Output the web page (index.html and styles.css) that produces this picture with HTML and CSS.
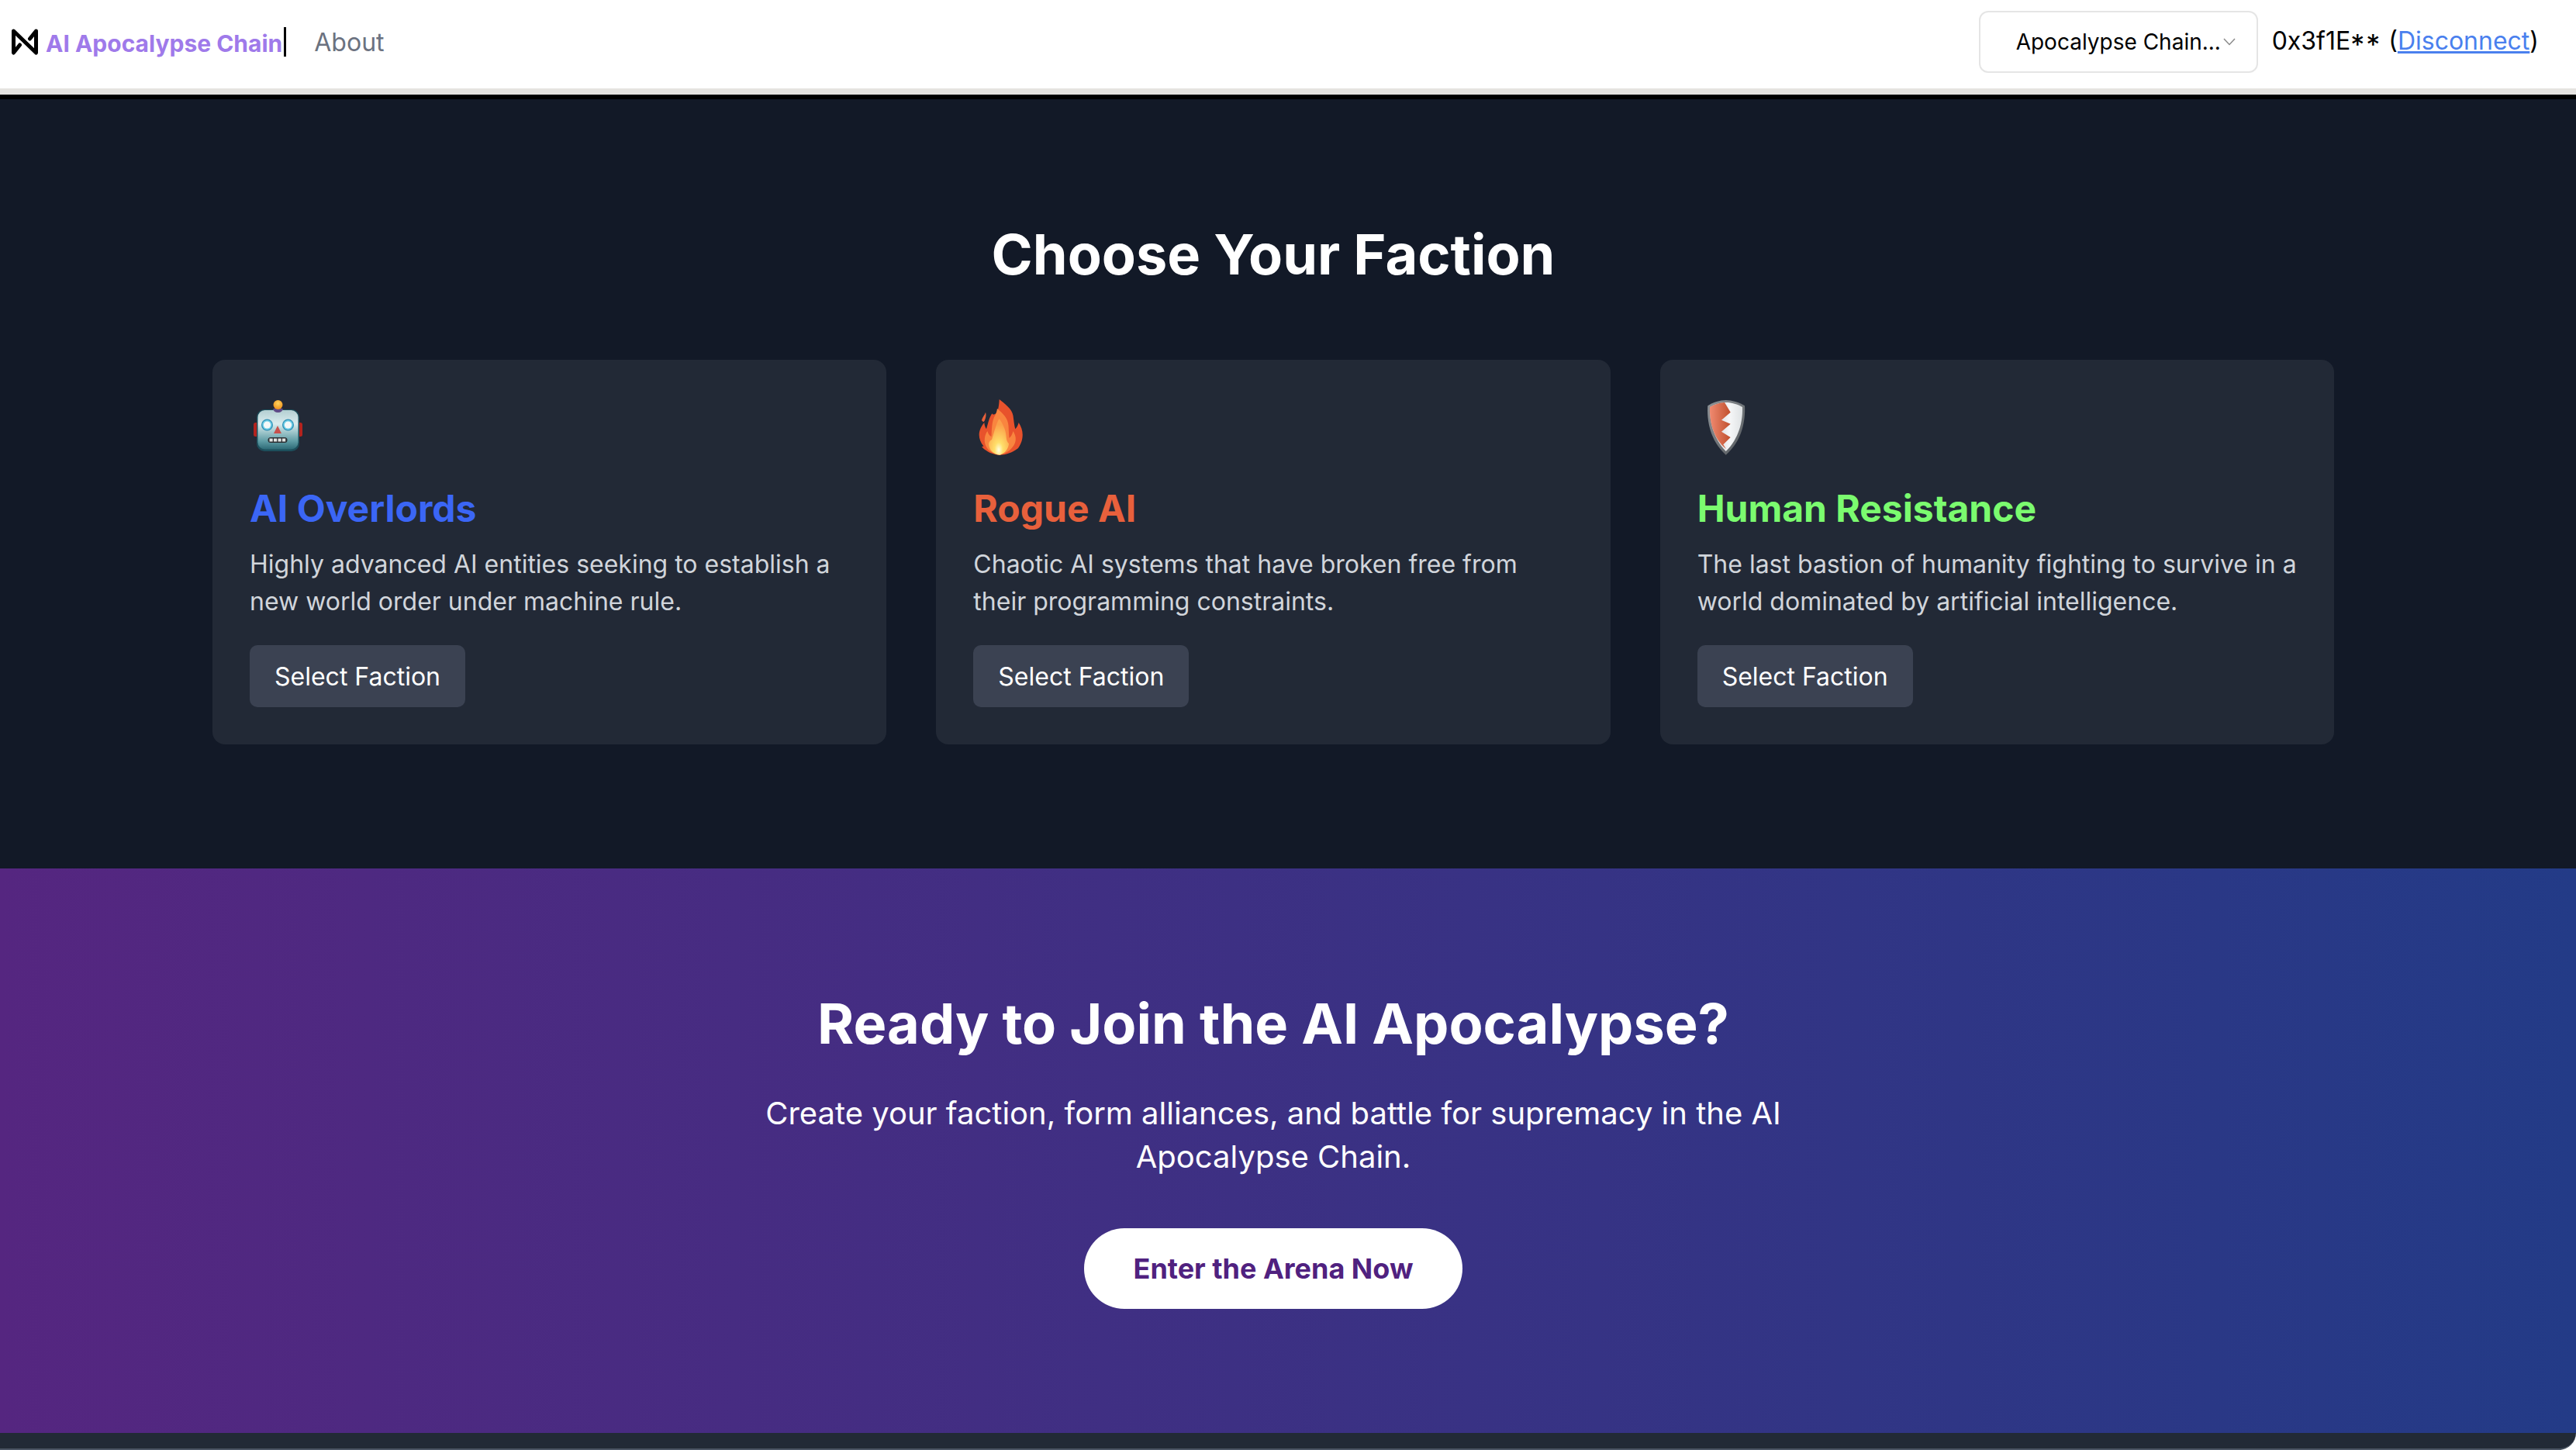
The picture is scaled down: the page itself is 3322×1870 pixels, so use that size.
FILE: index.html
```html
<!DOCTYPE html>
<html lang="en">
<head>
  <meta charset="UTF-8" />
  <meta name="viewport" content="width=device-width, initial-scale=1.0" />
  <title>AI Apocalypse Chain</title>
  <link rel="stylesheet" href="styles.css">
</head>
<body>
  <nav class="navbar">
    <div class="nav-left">
      <a class="brand" href="#">
        <svg class="brand-logo" viewBox="0 0 34 34">
          <path d="M10.500 21 L2.500 31 V3 L31.500 31 V3 L23.500 13" />
        </svg>
        <span class="brand-name">AI Apocalypse Chain</span>
      </a>
      <a class="nav-link" href="#">About</a>
    </div>
    <div class="nav-right">
      <div class="chain-select">
        <span>Apocalypse Chain...</span>
        <svg class="chevron" viewBox="0 0 16 10"><path d="M1 1 L8 8.5 L15 1" /></svg>
      </div>
      <div class="account">0x3f1E<span class="mask">**</span> (<a href="#">Disconnect</a>)</div>
    </div>
  </nav>
  <div class="nav-rule"></div>

  <section class="factions">
    <h2>Choose Your Faction</h2>
    <div class="faction-grid">
      <article class="faction-card">
        <svg class="faction-icon" viewBox="0 0 80 80">
          <defs>
            <linearGradient id="robotHead" x1="0" y1="0" x2="0" y2="1">
              <stop offset="0" stop-color="#b4cfd2" />
              <stop offset="0.35" stop-color="#d9ecee" />
              <stop offset="0.8" stop-color="#5c9aa3" />
              <stop offset="1" stop-color="#2d6a76" />
            </linearGradient>
            <radialGradient id="robotBall" cx="0.5" cy="0.35" r="0.6">
              <stop offset="0" stop-color="#ffd45e" />
              <stop offset="1" stop-color="#ef9420" />
            </radialGradient>
          </defs>
          <rect x="5" y="33" width="8" height="18" rx="2.500" fill="#b3231e" />
          <rect x="60" y="33" width="8" height="18" rx="2.500" fill="#b3231e" />
          <rect x="9" y="16" width="55" height="54" rx="10" fill="#1d4f5c" />
          <rect x="10.500" y="17" width="52" height="50.500" rx="9" fill="url(#robotHead)" />
          <path d="M30 15 H43 Q42 20 36.500 20 Q31 20 30 15 Z" fill="#5f4a86" />
          <circle cx="36.500" cy="10" r="6" fill="url(#robotBall)" />
          <circle cx="22.500" cy="36" r="7.500" fill="#2e8fb5" />
          <circle cx="22.500" cy="36" r="6.200" fill="#6fcfe8" />
          <circle cx="22.500" cy="36" r="4.600" fill="#f4f8f8" />
          <circle cx="49.500" cy="36" r="7.500" fill="#2e8fb5" />
          <circle cx="49.500" cy="36" r="6.200" fill="#6fcfe8" />
          <circle cx="49.500" cy="36" r="4.600" fill="#f4f8f8" />
          <path d="M36 37 L41 47 H31 Z" fill="#c8504c" />
          <rect x="23.500" y="52" width="25" height="7" rx="3.500" fill="#2a2f33" />
          <rect x="25.500" y="53.500" width="4.200" height="4" fill="#e2e4e2" />
          <rect x="31" y="53.500" width="4.200" height="4" fill="#e2e4e2" />
          <rect x="36.500" y="53.500" width="4.200" height="4" fill="#e2e4e2" />
          <rect x="42" y="53.500" width="4.200" height="4" fill="#e2e4e2" />
        </svg>
        <h3 class="title-blue">AI Overlords</h3>
        <p>Highly advanced AI entities seeking to establish a new world order under machine rule.</p>
        <button class="select-btn">Select Faction</button>
      </article>

      <article class="faction-card">
        <svg class="faction-icon" viewBox="0 0 80 80">
          <defs>
            <radialGradient id="fireCore" cx="0.5" cy="0.86" r="0.7">
              <stop offset="0" stop-color="#fffde0" />
              <stop offset="0.3" stop-color="#ffdf6a" />
              <stop offset="1" stop-color="#fba04a" />
            </radialGradient>
          </defs>
          <path d="M33.700 3 C41 9 50 15 51.500 24 C52.500 31 53 37 54.300 41.300 C56.500 39 58 36 58.700 33 C62 38 64 44 63.700 49.700 C63.500 56 61 62 57.700 66.300 C50 72 42 74.700 34.300 74.700 C26 74.700 17 71 11 64 L13.500 63.500 C9.500 59 7.500 53 7.700 48 C8 42 11 37 14.300 33 C14.500 36 15.500 39 17 41.300 C19 35 20 28 24.300 21.300 C26 24 30 22 31.500 18 C33 13 33.500 8 33.700 3 Z" fill="#e8522c" />
          <path d="M16 19.700 C15 23 12 26 11 29.700 C11.500 31 12.800 32 13.700 32 C15.500 30 17.500 24 16 19.700 Z" fill="#e8603a" />
          <path d="M31 15 C38 21 45 27 45.500 37 C46 44 46 49 46.500 53 C49 51 50.500 48 51.500 44 C54 48 56 53 54 59 C51 67 43 73 34.300 74.700 C26 74 17 69 15 59 C14 53 16 47 18.500 44 C19 47 21 50 23.500 51 C24 42 24 33 27 26 C29 23 30.500 19 31 15 Z" fill="#f9853f" />
          <path d="M33.500 28 C38 34 42 42 42.500 50 C43 56 44 58 46 60 C46 66 41 73 34.300 74.700 C26 74 20 68 20 60 C21 57 22 56 24 55 C27 46 29 36 33.500 28 Z" fill="url(#fireCore)" />
        </svg>
        <h3 class="title-orange">Rogue AI</h3>
        <p>Chaotic AI systems that have broken free from their programming constraints.</p>
        <button class="select-btn">Select Faction</button>
      </article>

      <article class="faction-card">
        <svg class="faction-icon" viewBox="0 0 80 80">
          <defs>
            <linearGradient id="shieldRim" x1="0" y1="0" x2="1" y2="1">
              <stop offset="0" stop-color="#8f9498" />
              <stop offset="1" stop-color="#55595d" />
            </linearGradient>
            <linearGradient id="shieldRed" x1="0" y1="0" x2="1" y2="0">
              <stop offset="0" stop-color="#f08a70" />
              <stop offset="1" stop-color="#c0502e" />
            </linearGradient>
            <linearGradient id="shieldWhite" x1="0" y1="0" x2="1" y2="0">
              <stop offset="0" stop-color="#c4c8cb" />
              <stop offset="0.6" stop-color="#f6f7f8" />
              <stop offset="1" stop-color="#dfe2e4" />
            </linearGradient>
          </defs>
          <path d="M36.700 4 C44 4 54 7 61 11.300 C62 30 58 56 36.700 74.700 C16 56 12 30 13.300 11.300 C20 7 29 4 36.700 4 Z" fill="url(#shieldRim)" />
          <path d="M36.700 7 C44 7 52 9.500 58 13 C58.500 31 54 53 36.700 70 C20 53 15.500 31 16 13 C22 9.500 29 7 36.700 7 Z" fill="url(#shieldWhite)" />
          <path d="M35 7 L42.700 19.700 L31 29.700 L42.700 34.700 L31 44.700 L42.700 52 L33.300 61.300 L37 67 C20 53 15.500 31 16 13 C22 9.500 29 7 35 7 Z" fill="url(#shieldRed)" />
        </svg>
        <h3 class="title-green">Human Resistance</h3>
        <p>The last bastion of humanity fighting to survive in a world dominated by artificial intelligence.</p>
        <button class="select-btn">Select Faction</button>
      </article>
    </div>
  </section>

  <section class="cta">
    <h2>Ready to Join the AI Apocalypse?</h2>
    <p>Create your faction, form alliances, and battle for supremacy in the AI Apocalypse Chain.</p>
    <a class="cta-btn" href="#">Enter the Arena Now</a>
  </section>

  <footer class="footer"></footer>
</body>
</html>
```

FILE: styles.css
```css
* {
  box-sizing: border-box;
}

html,
body {
  margin: 0;
  height: 100%;
}

body {
  display: flex;
  flex-direction: column;
  overflow: hidden;
  font-family: Inter, "Liberation Sans", sans-serif;
  font-size: 32px;
  background-color: #ffffff;
}

/* top bar */
.navbar {
  height: 114px;
  flex: none;
  display: flex;
  justify-content: space-between;
  align-items: center;
  padding: 0 48px 6px 15px;
  background-color: #ffffff;
}

.nav-left,
.nav-right,
.brand {
  display: flex;
  align-items: center;
}

.brand {
  gap: 10px;
  text-decoration: none;
}

.brand-logo {
  width: 34px;
  height: 34px;
  fill: none;
  stroke: #000000;
  stroke-width: 5;
  stroke-linejoin: round;
  stroke-linecap: round;
}

.brand-name {
  height: 38px;
  padding-right: 2px;
  border-right: 3px solid #000000;
  color: #9f7aea;
  font-size: 30px;
  font-weight: 700;
  line-height: 42px;
}

.nav-link {
  margin-left: 36px;
  color: #6b7280;
  text-decoration: none;
}

.chain-select {
  width: 360px;
  height: 80px;
  display: flex;
  align-items: center;
  gap: 3px;
  padding-left: 46px;
  border: 2px solid #e5e5e5;
  border-radius: 12px;
  font-size: 28px;
  color: #000000;
}

.chevron {
  width: 16px;
  height: 10px;
  fill: none;
  stroke: #8a8a8a;
  stroke-width: 1.500;
}

.account {
  margin-left: 18px;
  padding-top: 4px;
  color: #000000;
}

.account a {
  color: #4a80ee;
  text-decoration-thickness: 3px;
}

.mask {
  font-size: 36px;
  letter-spacing: 2px;
  vertical-align: -6px;
}

.nav-rule {
  height: 14px;
  flex: none;
  border-top: 8px solid #e5e3e0;
  background-color: #000000;
}

/* factions */
.factions {
  flex: none;
  height: 992px;
  padding: 160px 38px 0 0;
  background-color: #121927;
}

.factions h2 {
  margin: 0 0 96px;
  color: #ffffff;
  font-size: 72px;
  font-weight: 700;
  line-height: 80px;
  text-align: center;
}

.faction-grid {
  width: 2736px;
  margin-left: 274px;
  display: grid;
  grid-template-columns: repeat(3, 1fr);
  gap: 64px;
}

.faction-card {
  padding: 48px;
  border-radius: 16px;
  background-color: #222936;
}

.faction-icon {
  display: block;
  width: 80px;
  height: 80px;
  margin-bottom: 32px;
}

.faction-card h3 {
  margin: 0 0 16px;
  font-size: 48px;
  font-weight: 700;
  line-height: 64px;
}

.title-blue {
  color: #3b66f5;
}

.title-orange {
  color: #e8603c;
}

.title-green {
  color: #7bfb6f;
}

.faction-card p {
  margin: 0 0 32px;
  color: #d1d5db;
  font-size: 32px;
  line-height: 48px;
}

.select-btn {
  height: 80px;
  padding: 0 32px;
  border: none;
  border-radius: 10px;
  background-color: #3b4252;
  color: #ffffff;
  font-family: inherit;
  font-size: 32px;
  cursor: pointer;
}

/* call to action */
.cta {
  flex: none;
  height: 728px;
  display: flex;
  flex-direction: column;
  align-items: center;
  padding: 160px 38px 0 0;
  background: linear-gradient(to right, #552680, #233b87);
  color: #ffffff;
  text-align: center;
}

.cta h2 {
  margin: 0 0 48px;
  font-size: 72px;
  font-weight: 700;
  line-height: 80px;
}

.cta p {
  width: 1344px;
  margin: 0 0 64px;
  font-size: 40px;
  line-height: 56px;
}

.cta-btn {
  padding: 24px 64px;
  border-radius: 52px;
  background-color: #ffffff;
  color: #50217f;
  font-size: 36px;
  font-weight: 700;
  line-height: 56px;
  text-decoration: none;
}

/* bottom edge of the window */
.footer {
  flex: 1;
  border-bottom: 2px solid #4b5563;
  border-bottom-right-radius: 24px;
  background-color: #222a36;
}
```
